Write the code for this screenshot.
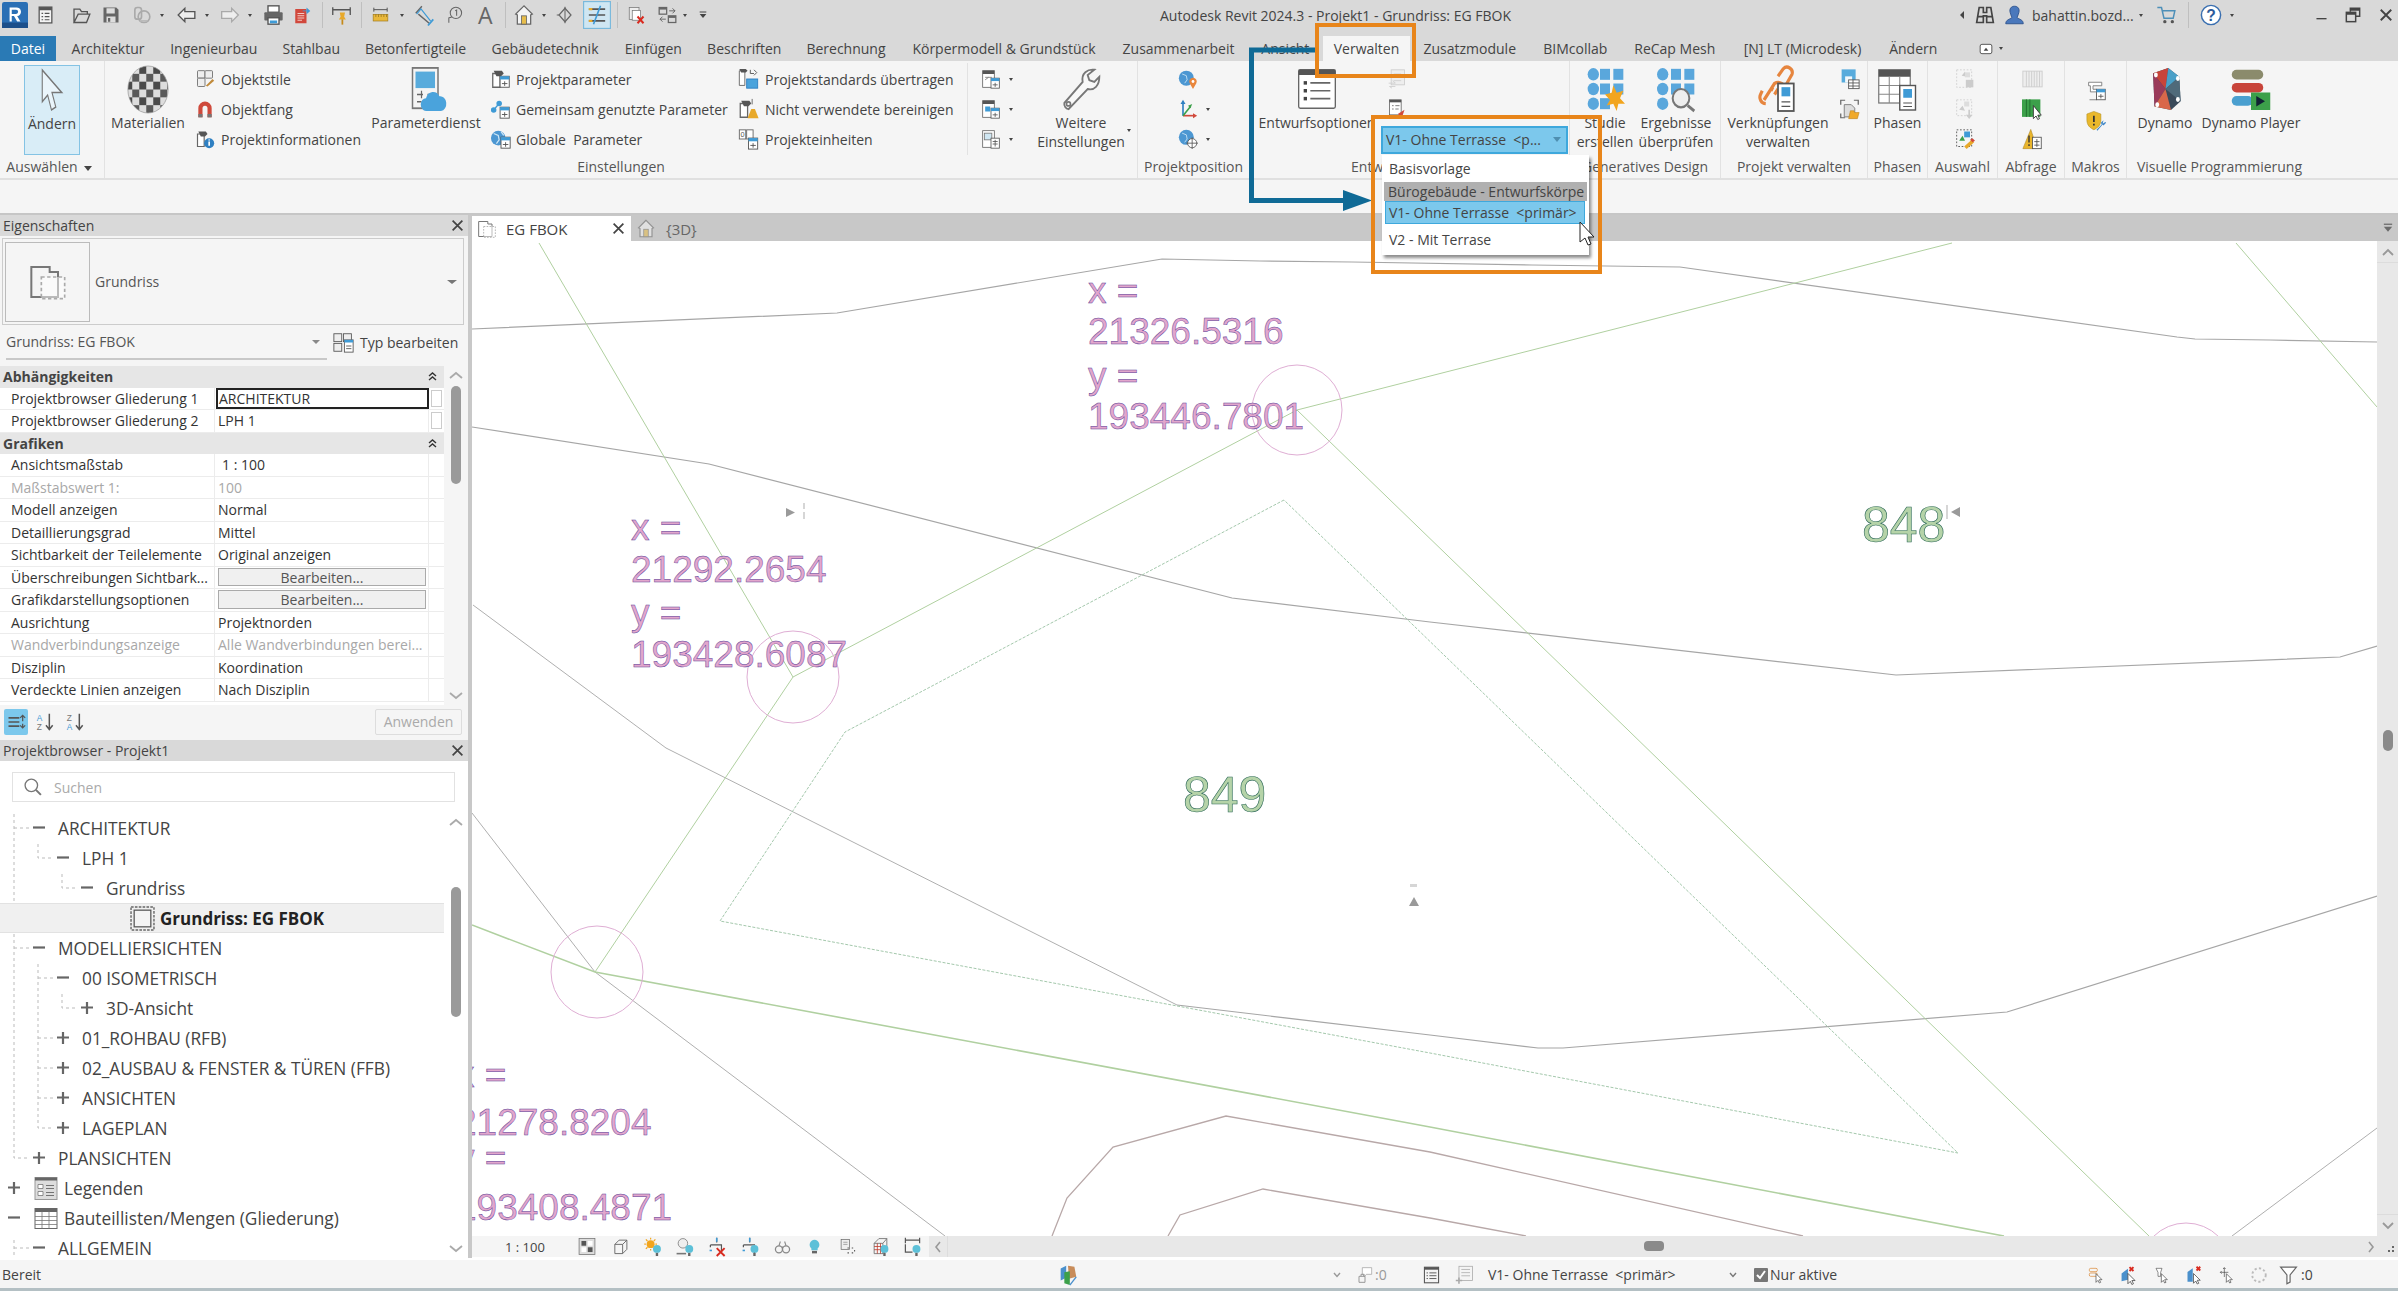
<!DOCTYPE html>
<html lang="de">
<head>
<meta charset="utf-8">
<title>Autodesk Revit 2024.3 - Projekt1 - Grundriss: EG FBOK</title>
<style>
  html, body { margin: 0; height: 100%; overflow: hidden; background: #fff; }
  body { font: 14px "Open Sans", "Noto Sans", sans-serif; color: #333; }
</style>
</head>
<body>
<rvt-app>
  <rvt-titlebar slot="top">
    <rvt-icon name="logo" w="26" h="26" style="margin-left:2px"></rvt-icon>
    <rvt-icon name="doclist" w="19" h="20" style="margin-left:8px"></rvt-icon>
    <rvt-icon name="open" w="21" h="20" style="margin-left:16px"></rvt-icon>
    <rvt-icon name="save" w="18" h="20" style="margin-left:10px"></rvt-icon>
    <rvt-icon name="sync" w="23" h="20" style="margin-left:10px"></rvt-icon>
    <rvt-caret style="margin-left:7px"></rvt-caret>
    <rvt-icon name="undo" w="23" h="20" style="margin-left:11px"></rvt-icon>
    <rvt-caret style="margin-left:7px"></rvt-caret>
    <rvt-icon name="redo" w="20" h="20" style="margin-left:11px"></rvt-icon>
    <rvt-caret style="margin-left:8px"></rvt-caret>
    <rvt-icon name="print" w="23" h="22" style="margin-left:10px"></rvt-icon>
    <rvt-icon name="reddoc" w="18" h="20" style="margin-left:8px"></rvt-icon>
    <rvt-sep style="margin-left:11px"></rvt-sep>
    <rvt-icon name="dimpin" w="21" h="22" style="margin-left:8px"></rvt-icon>
    <rvt-sep style="margin-left:9px"></rvt-sep>
    <rvt-icon name="ruler" w="19" h="16" style="margin-left:9px"></rvt-icon>
    <rvt-caret style="margin-left:10px"></rvt-caret>
    <rvt-icon name="aligned" w="21" h="22" style="margin-left:10px"></rvt-icon>
    <rvt-icon name="tagone" w="17" h="20" style="margin-left:11px"></rvt-icon>
    <span class="bigA" style="margin-left:15px;width:15px;font-size:23px;color:#666;line-height:26px">A</span>
    <rvt-sep style="margin-left:12px"></rvt-sep>
    <rvt-icon name="home" w="20" h="22" style="margin-left:8px"></rvt-icon>
    <rvt-caret style="margin-left:8px"></rvt-caret>
    <rvt-icon name="target" w="18" h="22" style="margin-left:10px"></rvt-icon>
    <rvt-icon name="thin" w="30" h="28" style="margin-left:8px"></rvt-icon>
    <rvt-sep style="margin-left:5px"></rvt-sep>
    <rvt-icon name="closeviews" w="18" h="22" style="margin-left:9px"></rvt-icon>
    <rvt-icon name="switchw" w="23" h="20" style="margin-left:11px"></rvt-icon>
    <rvt-caret style="margin-left:4px"></rvt-caret>
    <rvt-icon name="custom" w="8" h="10" style="margin-left:12px"></rvt-icon>
    <span slot="title">Autodesk Revit 2024.3 - Projekt1 - Grundriss: EG FBOK</span>
    <rvt-caret slot="right" dir="left"></rvt-caret>
    <rvt-icon slot="right" name="binoc" w="20" h="20" style="margin-left:11px"></rvt-icon>
    <rvt-icon slot="right" name="user" w="21" h="22" style="margin-left:9px"></rvt-icon>
    <span slot="right" style="margin-left:7px;width:102px;white-space:nowrap">bahattin.bozd...</span>
    <rvt-caret slot="right" style="margin-left:5px"></rvt-caret>
    <rvt-icon slot="right" name="cart" w="21" h="20" style="margin-left:13px"></rvt-icon>
    <rvt-sep slot="right" style="margin-left:11px"></rvt-sep>
    <rvt-icon slot="right" name="help" w="22" h="22" style="margin-left:11px"></rvt-icon>
    <rvt-caret slot="right" style="margin-left:8px"></rvt-caret>
    <rvt-icon slot="right" name="min" w="11" h="20" style="margin-left:82px"></rvt-icon>
    <rvt-icon slot="right" name="restore" w="16" h="16" style="margin-left:18px"></rvt-icon>
    <rvt-icon slot="right" name="close" w="14" h="14" style="margin-left:18px;margin-right:5px"></rvt-icon>
  </rvt-titlebar>

  <rvt-tabs slot="top">
    <rvt-tab kind="file" style="width:56px;margin-right:2.5px">Datei</rvt-tab>
    <rvt-tab style="width:99px">Architektur</rvt-tab>
    <rvt-tab style="width:112.5px">Ingenieurbau</rvt-tab>
    <rvt-tab style="width:82.5px">Stahlbau</rvt-tab>
    <rvt-tab style="width:126px">Betonfertigteile</rvt-tab>
    <rvt-tab style="width:133px">Gebäudetechnik</rvt-tab>
    <rvt-tab style="width:83.5px">Einfügen</rvt-tab>
    <rvt-tab style="width:98.5px">Beschriften</rvt-tab>
    <rvt-tab style="width:105px">Berechnung</rvt-tab>
    <rvt-tab style="width:211px">Körpermodell &amp; Grundstück</rvt-tab>
    <rvt-tab style="width:138px">Zusammenarbeit</rvt-tab>
    <rvt-tab style="width:75.5px">Ansicht</rvt-tab>
    <rvt-tab kind="active" style="width:87px">Verwalten</rvt-tab>
    <rvt-tab style="width:119.5px">Zusatzmodule</rvt-tab>
    <rvt-tab style="width:91.5px">BIMcollab</rvt-tab>
    <rvt-tab style="width:107.5px">ReCap Mesh</rvt-tab>
    <rvt-tab style="width:148px">[N] LT (Microdesk)</rvt-tab>
    <rvt-tab style="width:73.5px">Ändern</rvt-tab>
    <rvt-icon name="minribbon" w="18" h="14" style="margin-left:27px"></rvt-icon>
    <rvt-caret style="margin-left:4px"></rvt-caret>
  </rvt-tabs>

  <rvt-ribbon slot="top">
    <rvt-panel label="Auswählen" caret style="width:105px">
      <rvt-big icon="cursor" iw="26" ih="40" pressed style="width:56px;margin-left:24px">Ändern</rvt-big>
    </rvt-panel>

    <rvt-panel label="Einstellungen" style="width:1033px">
      <rvt-big icon="sphere" iw="42" ih="47" style="width:80px;margin-left:3px">Materialien</rvt-big>
      <rvt-col style="width:167px;margin-left:7px">
        <rvt-small icon="objstyle" gap="6">Objektstile</rvt-small>
        <rvt-small icon="magnet" gap="6">Objektfang</rvt-small>
        <rvt-small icon="projinfo" gap="6">Projektinformationen</rvt-small>
      </rvt-col>
      <rvt-big icon="paramsvc" iw="36" ih="44" style="width:110px;margin-left:9px">Parameterdienst</rvt-big>
      <rvt-col style="width:237px;margin-left:9px">
        <rvt-small icon="projparam" gap="4" iw="22">Projektparameter</rvt-small>
        <rvt-small icon="sharedparam" gap="4" iw="22">Gemeinsam genutzte Parameter</rvt-small>
        <rvt-small icon="globalparam" gap="4" iw="22">Globale  Parameter</rvt-small>
      </rvt-col>
      <rvt-col style="width:218px;margin-left:10px">
        <rvt-small icon="transfer" gap="5" iw="23">Projektstandards übertragen</rvt-small>
        <rvt-small icon="purge" gap="5" iw="23">Nicht verwendete bereinigen</rvt-small>
        <rvt-small icon="units" gap="5" iw="23">Projekteinheiten</rvt-small>
      </rvt-col>
      <rvt-sep tall style="margin-left:12px"></rvt-sep>
      <rvt-col style="width:40px;margin-left:13px">
        <rvt-small icon="seta" iw="20" caret></rvt-small>
        <rvt-small icon="setb" iw="20" caret></rvt-small>
        <rvt-small icon="setc" iw="20" caret></rvt-small>
      </rvt-col>
      <rvt-big icon="wrench" iw="40" ih="42" style="width:90px;margin-left:15px">Weitere<br>Einstellungen</rvt-big>
      <rvt-caret style="margin:68px 0 0 1px;align-self:flex-start"></rvt-caret>
    </rvt-panel>

    <rvt-panel label="Projektposition" style="width:112px">
      <rvt-col style="width:44px;margin-left:40px">
        <rvt-small icon="globepin" iw="20"></rvt-small>
        <rvt-small icon="axes" iw="20" caret></rvt-small>
        <rvt-small icon="globecross" iw="20" caret></rvt-small>
      </rvt-col>
    </rvt-panel>

    <rvt-panel label="Entwurfsoptionen" style="width:320px">
      <rvt-big icon="options" iw="40" ih="42" style="width:116px;margin-left:9px">Entwurfsoptionen</rvt-big>
      <rvt-col style="width:30px;margin-left:12px">
        <rvt-small icon="optfaded" iw="20"></rvt-small>
        <rvt-small icon="optred" iw="20"></rvt-small>
      </rvt-col>
    </rvt-panel>

    <rvt-panel label="Generatives Design" style="width:151px">
      <rvt-big icon="study" iw="40" ih="44" style="width:62px;margin-left:4px">Studie<br>erstellen</rvt-big>
      <rvt-big icon="results" iw="40" ih="44" style="width:76px;margin-left:2px">Ergebnisse<br>überprüfen</rvt-big>
    </rvt-panel>

    <rvt-panel label="Projekt verwalten" style="width:147px">
      <rvt-big icon="links" iw="42" ih="44" style="width:106px;margin-left:4px">Verknüpfungen<br>verwalten</rvt-big>
      <rvt-col style="width:24px;margin-left:8px">
        <rvt-small icon="decal" iw="21"></rvt-small>
        <rvt-small icon="startview" iw="21"></rvt-small>
      </rvt-col>
    </rvt-panel>

    <rvt-panel label="Phasen" style="width:60px">
      <rvt-big icon="phases" iw="42" ih="42" style="width:59px">Phasen</rvt-big>
    </rvt-panel>

    <rvt-panel label="Auswahl" style="width:70px">
      <rvt-col style="width:24px;margin-left:27px">
        <rvt-small icon="selsave" iw="20"></rvt-small>
        <rvt-small icon="selload" iw="20"></rvt-small>
        <rvt-small icon="seledit" iw="20"></rvt-small>
      </rvt-col>
    </rvt-panel>

    <rvt-panel label="Abfrage" style="width:67px">
      <rvt-col style="width:24px;margin-left:24px">
        <rvt-small icon="idgrey" iw="21"></rvt-small>
        <rvt-small icon="idgreen" iw="21"></rvt-small>
        <rvt-small icon="warn" iw="21"></rvt-small>
      </rvt-col>
    </rvt-panel>

    <rvt-panel label="Makros" style="width:62px">
      <rvt-col style="width:24px;margin-left:21px;padding-top:15px">
        <rvt-small icon="macro" iw="21"></rvt-small>
        <rvt-small icon="shield" iw="21"></rvt-small>
      </rvt-col>
    </rvt-panel>

    <rvt-panel label="Visuelle Programmierung" style="width:185px;border-right:0">
      <rvt-big icon="dynamo" iw="33" ih="42" style="width:64px;margin-left:6px">Dynamo</rvt-big>
      <rvt-big icon="player" iw="42" ih="42" style="width:100px;margin-left:4px">Dynamo Player</rvt-big>
    </rvt-panel>
  </rvt-ribbon>

  <rvt-properties slot="left">
    <rvt-prop-head>Abhängigkeiten</rvt-prop-head>
    <rvt-prop-row label="Projektbrowser Gliederung 1" kind="input" box>ARCHITEKTUR</rvt-prop-row>
    <rvt-prop-row label="Projektbrowser Gliederung 2" box>LPH 1</rvt-prop-row>
    <rvt-prop-head>Grafiken</rvt-prop-head>
    <rvt-prop-row label="Ansichtsmaßstab"><span style="padding-left:4px">1 : 100</span></rvt-prop-row>
    <rvt-prop-row label="Maßstabswert 1:" kind="off">100</rvt-prop-row>
    <rvt-prop-row label="Modell anzeigen">Normal</rvt-prop-row>
    <rvt-prop-row label="Detaillierungsgrad">Mittel</rvt-prop-row>
    <rvt-prop-row label="Sichtbarkeit der Teilelemente">Original anzeigen</rvt-prop-row>
    <rvt-prop-row label="Überschreibungen Sichtbark..." kind="button">Bearbeiten...</rvt-prop-row>
    <rvt-prop-row label="Grafikdarstellungsoptionen" kind="button">Bearbeiten...</rvt-prop-row>
    <rvt-prop-row label="Ausrichtung">Projektnorden</rvt-prop-row>
    <rvt-prop-row label="Wandverbindungsanzeige" kind="off">Alle Wandverbindungen berei...</rvt-prop-row>
    <rvt-prop-row label="Disziplin">Koordination</rvt-prop-row>
    <rvt-prop-row label="Verdeckte Linien anzeigen">Nach Disziplin</rvt-prop-row>
  </rvt-properties>

  <rvt-browser slot="left">
    <rvt-tree-row level="1" exp="-">ARCHITEKTUR</rvt-tree-row>
    <rvt-tree-row level="2" exp="-">LPH 1</rvt-tree-row>
    <rvt-tree-row level="3" exp="-">Grundriss</rvt-tree-row>
    <rvt-tree-row level="4" selected>Grundriss: EG FBOK</rvt-tree-row>
    <rvt-tree-row level="1" exp="-">MODELLIERSICHTEN</rvt-tree-row>
    <rvt-tree-row level="2" exp="-">00 ISOMETRISCH</rvt-tree-row>
    <rvt-tree-row level="3" exp="+">3D-Ansicht</rvt-tree-row>
    <rvt-tree-row level="2" exp="+">01_ROHBAU (RFB)</rvt-tree-row>
    <rvt-tree-row level="2" exp="+">02_AUSBAU &amp; FENSTER &amp; TÜREN (FFB)</rvt-tree-row>
    <rvt-tree-row level="2" exp="+">ANSICHTEN</rvt-tree-row>
    <rvt-tree-row level="2" exp="+">LAGEPLAN</rvt-tree-row>
    <rvt-tree-row level="1" exp="+">PLANSICHTEN</rvt-tree-row>
    <rvt-tree-row level="0" exp="+" icon="legend">Legenden</rvt-tree-row>
    <rvt-tree-row level="0" exp="-" icon="schedule">Bauteillisten/Mengen (Gliederung)</rvt-tree-row>
    <rvt-tree-row level="1" exp="-">ALLGEMEIN</rvt-tree-row>
  </rvt-browser>

  <rvt-viewtabs slot="right"></rvt-viewtabs>
  <rvt-canvas slot="right"></rvt-canvas>
  <rvt-viewbar slot="right"></rvt-viewbar>

  <rvt-statusbar slot="bottom"></rvt-statusbar>

  <rvt-callouts slot="over">
    <rvt-option>Basisvorlage</rvt-option>
    <rvt-option kind="current">Bürogebäude - Entwurfskörpe</rvt-option>
    <rvt-option kind="hover">V1- Ohne Terrasse&nbsp; &lt;primär&gt;</rvt-option>
    <rvt-option>V2 - Mit Terrase</rvt-option>
  </rvt-callouts>
</rvt-app>

<script>
// small table with plus, sits in the corner of most of the parameter icons
const tbl = (x, y) => `<rect x="${x}" y="${y}" width="10" height="12" fill="#fff" stroke="#555"/><rect x="${x}" y="${y}" width="10" height="3.5" fill="#3f9bd6"/><path d="M${x+2} ${y+8}h6M${x+5} ${y+5.5}v5" stroke="#555"/>`;
const phone = `<path d="M3 6h8v15H3z" fill="#fff" stroke="#666" stroke-width="1.4"/><path d="M4 3h9l2 3-3 3H7z" fill="#555"/>`;

const ICONS = {
  logo: `<rect x="0" y="0" width="24" height="24" rx="2" fill="#2a6fb5"/><rect x="0" y="19" width="24" height="5" fill="#1c4f8a"/><path d="M7 5h6a4 4 0 0 1 1 8l3 5h-3l-3-5h-2v5H7zM9 7.2v3.8h4a1.9 1.9 0 0 0 0-3.8z" fill="#fff"/>`,
  doclist: `<rect x="4" y="2" width="16" height="20" fill="#f4f4f4" stroke="#555" stroke-width="1.6"/><rect x="4" y="2" width="16" height="4" fill="#555"/><path d="M7 10h2M11 10h6M7 14h2M11 14h6M7 18h2M11 18h6" stroke="#555" stroke-width="1.4"/>`,
  open: `<path d="M3 21V5h7l2 3h7v3M3 21l5-10h14l-4 10z" fill="none" stroke="#555" stroke-width="1.6"/>`,
  save: `<path d="M2 2h17l3 3v17H2z" fill="#666"/><rect x="6" y="3" width="11" height="7" fill="#ddd"/><rect x="6" y="14" width="12" height="8" fill="#ddd"/><rect x="8" y="16" width="3" height="5" fill="#666"/>`,
  sync: `<circle cx="15" cy="14" r="7" fill="none" stroke="#aaa" stroke-width="2"/><rect x="4" y="3" width="8" height="14" rx="3" fill="none" stroke="#aaa" stroke-width="2"/><path d="M10 19h9" stroke="#bbb" stroke-width="2"/>`,
  undo: `<path d="M2 12l8-8v4h12v8H10v4z" fill="#eee" stroke="#555" stroke-width="1.6"/>`,
  redo: `<path d="M22 12l-8-8v4H2v8h12v4z" fill="#eee" stroke="#aaa" stroke-width="1.6"/>`,
  print: `<rect x="6" y="2" width="12" height="7" fill="#fff" stroke="#555" stroke-width="1.5"/><rect x="2" y="9" width="20" height="9" rx="1" fill="#666"/><rect x="6" y="15" width="12" height="7" fill="#fff" stroke="#555" stroke-width="1.5"/><rect x="8" y="18" width="8" height="3" fill="#3f9bd6"/>`,
  reddoc: `<rect x="3" y="4" width="15" height="19" fill="#d1483c"/><path d="M6 10h9M6 13h9M6 16h9M6 19h6" stroke="#f4c8c2" stroke-width="1.4"/><path d="M13 6h5V2l5 4.5-5 4.5V7h-5z" fill="#3f9bd6"/>`,
  dimpin: `<path d="M2 3v9M22 3v9M2 6h20" stroke="#555" stroke-width="1.5" fill="none"/><path d="M10 9h6l-1 5 2 3H9l2-3z" fill="#e8a92a"/><path d="M13 17v6" stroke="#c58a1a" stroke-width="2"/>`,
  ruler: `<path d="M2 1v6M22 1v6M2 4h20" stroke="#555" stroke-width="1.5" fill="none"/><rect x="1" y="11" width="22" height="10" fill="#e9b83c" stroke="#a07a1a"/><path d="M5 11v4M9 11v4M13 11v4M17 11v4M21 11v4" stroke="#8a6a1a"/>`,
  aligned: `<path d="M2 10L9 2M5 11l13 11" stroke="#666" stroke-width="1.6" fill="none"/><path d="M16 24l6-7" stroke="#3f9bd6" stroke-width="2"/><path d="M3 11l5-6 11 14" stroke="#3f9bd6" stroke-width="1.4" fill="none"/>`,
  tagone: `<circle cx="14" cy="9" r="8" fill="none" stroke="#666" stroke-width="1.5"/><path d="M13 6l2-1v8" stroke="#666" stroke-width="1.5" fill="none"/><path d="M8 15l-4 1v7" stroke="#666" stroke-width="1.5" fill="none"/>`,
  home: `<path d="M12 1L2 11l2 1v11h16V12l2-1z" fill="#f4f4f4" stroke="#666" stroke-width="1.5"/><rect x="9" y="13" width="6" height="10" fill="#e7bd4a" stroke="#666"/>`,
  target: `<path d="M12 1v22M1 12h3" stroke="#666" stroke-width="1.4"/><path d="M12 3l8 9-8 9-8-9z" fill="none" stroke="#666" stroke-width="1.6"/>`,
  thin: `<rect x="0.5" y="0.5" width="23" height="23" fill="#cfe6f2" stroke="#7ab9dc"/><path d="M5 7h14M5 12h14M5 17h14" stroke="#555" stroke-width="1.4"/><path d="M9 20L15 4" stroke="#3f9bd6" stroke-width="1.4"/><path d="M5 7h3M5 17h3" stroke="#e8a92a" stroke-width="2"/>`,
  closeviews: `<rect x="3" y="2" width="13" height="16" fill="#eee" stroke="#777"/><rect x="7" y="6" width="11" height="13" fill="#fff" stroke="#777"/><path d="M14 14l8 9M22 14l-8 9" stroke="#d92b20" stroke-width="2.6"/>`,
  switchw: `<rect x="2" y="3" width="9" height="8" fill="none" stroke="#666" stroke-width="1.5"/><rect x="13" y="13" width="9" height="8" fill="none" stroke="#666" stroke-width="1.5"/><rect x="2" y="3" width="9" height="2.5" fill="#666"/><rect x="13" y="13" width="9" height="2.5" fill="#666"/><path d="M14 7h7M18 4l3 3-3 3M10 17H3M6 14l-3 3 3 3" stroke="#555" fill="none"/>`,
  custom: `<path d="M2 3h20" stroke="#444" stroke-width="3"/><path d="M2 9h20l-10 12z" fill="#444"/>`,
  binoc: `<path d="M5 3h5v6h4V3h5l3 18h-8v-8h-4v8H2z" fill="none" stroke="#444" stroke-width="2"/><path d="M3 14h7M14 14h7" stroke="#444" stroke-width="2"/>`,
  user: `<path d="M12 2c4 0 6 3 5 7-1 4-2 5-2 6 2 2 7 2 7 7H2c0-5 5-5 7-7 0-1-1-2-2-6-1-4 1-7 5-7z" fill="#4a78bc" stroke="#2a4f8a"/>`,
  cart: `<path d="M1 3h5l3 13h11l2-9H7" fill="none" stroke="#4d8fb8" stroke-width="1.8"/><circle cx="10" cy="20" r="2" fill="#555"/><circle cx="19" cy="20" r="2" fill="#555"/>`,
  help: `<circle cx="12" cy="12" r="10.5" fill="#fff" stroke="#3a6fb0" stroke-width="1.6"/><text x="12" y="18" font-size="17" font-weight="700" text-anchor="middle" fill="#2c5c9c" font-family="Liberation Sans, sans-serif">?</text>`,
  min: `<path d="M1 20h22" stroke="#444" stroke-width="3"/>`,
  restore: `<path d="M8 7V2h14v12h-6" fill="none" stroke="#444" stroke-width="2.2"/><rect x="2" y="8" width="14" height="14" fill="none" stroke="#444" stroke-width="2.2"/><path d="M2 10h14M8 4h14" stroke="#444" stroke-width="3"/>`,
  close: `<path d="M3 3l18 18M21 3L3 21" stroke="#444" stroke-width="3.2"/>`,
  minribbon: `<rect x="2" y="4" width="20" height="16" rx="3" fill="#fff" stroke="#444" stroke-width="1.5"/><path d="M8 15l4-5 4 5z" fill="#444"/>`,

  cursor: `<path d="M3 0v19l5-4 3.5 9 4-1.8L12 13.5h9z" fill="#eaf5fb" stroke="#777" stroke-width="1"/>`,
  sphere: `<defs><pattern id="chk" width="8" height="8" patternUnits="userSpaceOnUse" x="-1" y="0"><rect width="8" height="8" fill="#ddd"/><rect width="4" height="4" fill="#4a4a4a"/><rect x="4" y="4" width="4" height="4" fill="#5a5a5a"/></pattern></defs><ellipse cx="12" cy="12" rx="11.5" ry="12" fill="url(#chk)" stroke="#999" stroke-width=".4"/>`,
  objstyle: `<rect x="3" y="2" width="9" height="9" rx="1" fill="#eee" stroke="#666"/><rect x="12" y="2" width="9" height="9" rx="1" fill="#eee" stroke="#666"/><rect x="3" y="11" width="9" height="10" rx="1" fill="#eee" stroke="#666"/><path d="M13 20l8-8 2 2-8 7z" fill="#c08a3a"/>`,
  magnet: `<path d="M4 22V11a8 8 0 0 1 16 0v11h-5V11a3 3 0 0 0-6 0v11z" fill="#cf4a3c"/><rect x="4" y="18" width="5" height="4" fill="#777"/><rect x="15" y="18" width="5" height="4" fill="#777"/>`,
  projinfo: phone + `<circle cx="17" cy="17" r="6" fill="#2f80c2"/><path d="M17 15v5M17 12.5v1.2" stroke="#fff" stroke-width="2"/>`,
  paramsvc: `<rect x="3" y="0.5" width="17" height="22" fill="#f4f4f4" stroke="#777"/><rect x="5" y="2.5" width="13" height="9" fill="#58abdc"/><path d="M6 15h4M13 15h4M6 19h3M12 19h5M9 13v4M14 17v4" stroke="#666" stroke-width=".8"/><path d="M12 24a3.5 3.5 0 0 1 0-7 5 5 0 0 1 9-1 4 4 0 0 1 1 8z" fill="#4aa3dc"/>`,
  projparam: phone + tbl(11, 9),
  sharedparam: `<circle cx="4" cy="13" r="3" fill="#3f9bd6"/><circle cx="10" cy="6" r="3" fill="#3f9bd6"/><path d="M4 13l6-7" stroke="#3f9bd6" stroke-width="1.5"/>` + tbl(11, 10),
  globalparam: `<circle cx="9" cy="11" r="8" fill="#4c97d2"/><path d="M4 6l5 2 1 5-3 4M12 4l3 4" stroke="#cfe7f6" fill="none" stroke-width="1.3"/>` + tbl(12, 10),
  transfer: `<path d="M2 3h6v16H2z" fill="#fff" stroke="#666"/><path d="M2 1h7l2 2-2 2H4z" fill="#555"/><path d="M14 2v4h4M18 2l3 3-3 3" stroke="#555" fill="none"/><rect x="10" y="12" width="12" height="10" fill="#4aa3dc" stroke="#2f80c2"/>`,
  purge: phone + `<path d="M16 1v6" stroke="#666"/><path d="M15 12h4l4 10H11z" fill="#e8a92a"/>`,
  units: `<rect x="2" y="2" width="7" height="10" fill="#fff" stroke="#666"/><rect x="10" y="2" width="7" height="10" fill="#fff" stroke="#666"/><text x="5.5" y="10" font-size="8" text-anchor="middle" font-family="Liberation Sans" fill="#555">0</text>` + tbl(12, 11),
  seta: `<rect x="2" y="2" width="14" height="20" fill="#fff" stroke="#666"/><rect x="2" y="2" width="14" height="4" fill="#555"/><path d="M5 10h8M5 13l4-3" stroke="#777"/>` + tbl(12, 11),
  setb: `<rect x="2" y="2" width="14" height="20" fill="#fff" stroke="#666"/><rect x="2" y="2" width="14" height="4" fill="#555"/><rect x="5" y="9" width="6" height="6" fill="#3f9bd6"/>` + tbl(12, 11),
  setc: `<rect x="2" y="2" width="14" height="20" fill="#fff" stroke="#666"/><rect x="4" y="5" width="9" height="8" fill="#cfe6f2" stroke="#777"/><rect x="12" y="11" width="10" height="12" fill="#fff" stroke="#555"/><path d="M14 15h6M14 18h6M17 13v8" stroke="#555"/>`,
  wrench: `<path d="M20 1c-4-.5-8 2-7 7L2 20a3 3 0 0 0 2.5 3.5L16 12c4 1 7-2 7-7l-3 3-3-1-1-3z" fill="#f8f8f8" stroke="#777" stroke-width="1.1"/><circle cx="4.5" cy="20.5" r="1.2" fill="none" stroke="#777"/>`,
  globepin: `<circle cx="10" cy="11" r="9" fill="#4c97d2"/><path d="M5 6l5 2 1 5-3 4" stroke="#cfe7f6" fill="none"/><path d="M18 24l-4-7a4.5 4.5 0 1 1 8 0z" fill="#e9863c"/><circle cx="18" cy="15" r="1.7" fill="#fff"/>`,
  axes: `<path d="M6 20V3" stroke="#2f80c2" stroke-width="2"/><path d="M6 1l-3 5h6z" fill="#2f80c2"/><path d="M6 20h14" stroke="#d14a3c" stroke-width="2"/><path d="M23 20l-5-3v6z" fill="#d14a3c"/><path d="M6 20l9-11" stroke="#3ca04a" stroke-width="2"/><path d="M17 6l-5 2 3 3z" fill="#3ca04a"/>`,
  globecross: `<circle cx="10" cy="10" r="9" fill="#4c97d2"/><path d="M5 5l5 2 1 5-3 4" stroke="#cfe7f6" fill="none"/><circle cx="17" cy="17" r="5.5" fill="#fff" stroke="#555"/><path d="M17 10v14M10 17h14" stroke="#555"/>`,
  options: `<rect x="1" y="1" width="22" height="22" rx="1" fill="#fff" stroke="#666" stroke-width=".8"/><rect x="1" y="1" width="22" height="3" fill="#555"/><rect x="4" y="7.5" width="2" height="2" fill="#444"/><rect x="4" y="12" width="2" height="2" fill="#444"/><rect x="4" y="16.5" width="2" height="2" fill="#444"/><path d="M8 8.5h12M8 13h12M8 17.5h12" stroke="#666" stroke-width=".9"/>`,
  optfaded: `<rect x="5" y="1" width="16" height="18" fill="#eee" stroke="#ccc"/><path d="M8 6h9M8 10h9M8 14h9" stroke="#ccc"/><path d="M2 17h8l-3-3M10 21H3l3 2" stroke="#ccc" fill="none"/>`,
  optred: `<rect x="3" y="1" width="14" height="18" fill="#fff" stroke="#666"/><rect x="3" y="1" width="14" height="3" fill="#555"/><path d="M6 8h2M10 8h5M6 12h2M10 12h4" stroke="#666"/><path d="M13 18l8-5-3 9z" fill="#d14a3c"/>`,
  study: `<g fill="#5aa7dc"><circle cx="5" cy="4" r="3.4"/><rect x="9" y="1" width="6" height="6"/><rect x="17" y="1" width="6" height="6"/><circle cx="5" cy="12" r="3.4"/><rect x="9" y="9" width="6" height="6"/><rect x="17" y="9" width="6" height="6"/><circle cx="5" cy="20" r="3.4"/><rect x="9" y="17" width="6" height="6"/></g><path d="M17 10l2 4 4-1-2 4 3 3-4 0-1 4-2-4-4 1 2-3-3-3 4-1z" fill="#f2a51e"/>`,
  results: `<g fill="#5aa7dc"><circle cx="4" cy="4" r="3.4"/><rect x="9" y="1" width="6" height="6"/><rect x="17" y="1" width="6" height="6"/><circle cx="4" cy="12" r="3.4"/><rect x="9" y="9" width="6" height="6"/><rect x="17" y="9" width="6" height="6"/><circle cx="4" cy="20" r="3.4"/></g><circle cx="15" cy="17" r="5" fill="#eee" stroke="#777" stroke-width="1.2"/><path d="M19 21l4 3" stroke="#777" stroke-width="1.6"/>`,
  links: `<path d="M4 18l6-9a4 4 0 0 1 6 4l-2 3M9 11l-1 2M2 15l1-2M5 20a3.5 3.5 0 0 1-3-5" fill="none" stroke="#e6853e" stroke-width="1.8"/><path d="M12 12l-2 3M17 9l3-5a3 3 0 0 0-5-3l-3 4" fill="none" stroke="#e6853e" stroke-width="1.8"/><rect x="12" y="9" width="9" height="15" fill="#fff" stroke="#555"/><rect x="14" y="11" width="5" height="5" fill="#3f9bd6"/><path d="M14 19h5M14 21.5h5" stroke="#555" stroke-width=".7"/>`,
  decal: `<rect x="3" y="1" width="16" height="15" fill="#58abdc"/><rect x="7" y="9" width="8" height="7" fill="#f2f8fc"/><rect x="11" y="13" width="12" height="10" fill="#fff" stroke="#555"/><path d="M11 16.5h12M11 20h12M16 13v10" stroke="#555"/>`,
  startview: `<path d="M2 7V2h5M22 7V2h-5M2 17v5h5" fill="none" stroke="#666" stroke-width="1.4"/><path d="M6 7h8l4 4v10H6z" fill="#ddd" stroke="#777"/><path d="M13 14h4l1 2h5l-2 7H11z" fill="#f0a92a" stroke="#b57c1a" stroke-width=".6"/>`,
  phases: `<rect x="1" y="1" width="18" height="19" fill="#fff" stroke="#777" stroke-width=".7"/><rect x="1" y="1" width="18" height="4" fill="#555"/><path d="M1 10h18M1 15h12M7 5v15M13 5v15" stroke="#888" stroke-width=".6"/><rect x="13" y="10" width="9" height="14" fill="#fff" stroke="#555" stroke-width=".8"/><rect x="15" y="12" width="5" height="5" fill="#3f9bd6"/><path d="M15 20h5M15 22h5" stroke="#555" stroke-width=".6"/>`,
  selsave: `<rect x="2" y="1" width="18" height="21" fill="none" stroke="#ccc" stroke-dasharray="2 2"/><path d="M8 8l4-5 1 6z" fill="#ccc"/><rect x="12" y="4" width="6" height="6" fill="#ddd"/><rect x="13" y="13" width="9" height="9" fill="#ccc"/>`,
  selload: `<rect x="2" y="1" width="18" height="19" fill="none" stroke="#ccc" stroke-dasharray="2 2"/><path d="M5 13l4-5 3 6z" fill="#ccc"/><rect x="11" y="3" width="6" height="6" fill="#ddd"/><path d="M18 13v6h3l-4 5-4-5h3v-6z" fill="#ccc"/>`,
  seledit: `<rect x="2" y="1" width="18" height="20" fill="none" stroke="#444" stroke-dasharray="2 2"/><path d="M5 14l4-6 3 6z" fill="#3ca04a"/><rect x="11" y="3" width="7" height="7" fill="#3f9bd6"/><path d="M11 21l9-8 3 3-9 8z" fill="#e8a92a"/><path d="M18 13l3-2 3 3-3 2z" fill="#d14a3c"/>`,
  idgrey: `<rect x="1" y="3" width="22" height="18" fill="#eee" stroke="#ccc"/><path d="M5 3v18M8 3v18M11 3v18M14 3v18M17 3v18M20 3v18" stroke="#ccc"/>`,
  idgreen: `<rect x="0" y="1" width="21" height="20" fill="#3ca04a"/><path d="M5 1v20M9 1v20" stroke="#1e6a2c"/><path d="M13 8v15l3-3 2 4 2-1-2-4 4 0z" fill="#fff" stroke="#333"/>`,
  warn: `<path d="M10 1L1 23h12V10z" fill="#e9b52c" stroke="#a8801a" stroke-width=".6"/><path d="M8 8v8M8 18v2" stroke="#333" stroke-width="1.6"/><rect x="12" y="10" width="10" height="13" fill="#fff" stroke="#555"/><path d="M14 15h6M17 12v9M14 19h6" stroke="#555"/>`,
  macro: `<path d="M3 2h15v4H8v4h4v3H5V6H3z" fill="#fff" stroke="#777"/><path d="M4 22h8v-6" fill="none" stroke="#777"/>` + tbl(12, 10),
  shield: `<path d="M9 1l8 3v7c0 6-4 9-8 11-4-2-8-5-8-11V4z" fill="#e9b82c" stroke="#b08a1a" stroke-width=".6"/><path d="M9 6v7M9 15v2" stroke="#333" stroke-width="2"/><path d="M13 23l6-7 1 1 3-3-1-1-3 2 1-4-3 3 1 2-6 6z" fill="#3f86c6"/>`,
  dynamo: `<path d="M3 3L14 0l8 5 1 14-7 5-12-2z" fill="#3a4a5a"/><path d="M3 3L14 0 12 12z" fill="#c8443a"/><path d="M14 0l8 5-10 7z" fill="#4aa0c8"/><path d="M3 3l9 9-8 10z" fill="#9a3a5a"/><path d="M4 22l8-10 4 12z" fill="#d9674a"/><path d="M22 5l1 14-11-7z" fill="#4f6a7a"/><g fill="#fff"><circle cx="5" cy="4" r="1.4"/><circle cx="21" cy="6" r="1.4"/><circle cx="21" cy="18" r="1.4"/><circle cx="6" cy="21" r="1.4"/></g>`,
  player: `<rect x="1" y="1" width="18" height="5.5" rx="2.7" fill="#8b8b6c"/><rect x="1" y="8.5" width="18" height="5.5" rx="2.7" fill="#c8443a"/><rect x="1" y="16" width="12" height="5.5" rx="2.7" fill="#4a9fcf"/><rect x="12" y="14" width="11" height="10" fill="#3ca04a"/><path d="M15 16v6l5-3z" fill="#123"/>`,
  planview: `<path d="M1 1h22v22H1z" fill="none" stroke="#888" stroke-dasharray="2.5 1.2" stroke-width="1.8"/><rect x="4" y="4" width="16" height="16" fill="#f4f4f4" stroke="#555" stroke-width="1.2"/>`,
  grundriss: `<path d="M2 3h11v3h5v15H2z" fill="none" stroke="#777" stroke-width="1.2"/><path d="M8 9h14v13H8z" fill="#fff" fill-opacity=".5" stroke="#aaa" stroke-dasharray="2 1.5"/>`,
  typedit: `<rect x="1" y="2" width="9" height="9" fill="#eee" stroke="#555"/><rect x="12" y="2" width="9" height="9" fill="#eee" stroke="#555"/><rect x="1" y="13" width="9" height="9" fill="#eee" stroke="#555"/><rect x="13" y="9" width="10" height="14" fill="#fff" stroke="#555"/><rect x="13" y="9" width="10" height="3" fill="#3f9bd6"/><path d="M15 16h6M15 19h6" stroke="#555"/>`,
  categ: `<path d="M3 7h13M3 12h13M3 17h13" stroke="#555" stroke-width="2"/><path d="M20 4v7M20 14v5M17 7l3-3 3 3M17 16l3 3 3-3" stroke="#555" stroke-width="1.5" fill="none"/>`,
  sortaz: `<text x="1" y="11" font-size="10" fill="#3f9bd6" font-family="Liberation Sans">A</text><text x="1" y="22" font-size="10" fill="#777" font-family="Liberation Sans">Z</text><path d="M16 2v18M12 16l4 5 4-5" stroke="#555" stroke-width="1.8" fill="none"/>`,
  sortza: `<text x="1" y="11" font-size="10" fill="#777" font-family="Liberation Sans">Z</text><text x="1" y="22" font-size="10" fill="#3f9bd6" font-family="Liberation Sans">A</text><path d="M16 2v18M12 16l4 5 4-5" stroke="#555" stroke-width="1.8" fill="none"/>`,
  search: `<circle cx="10" cy="10" r="7.5" fill="none" stroke="#777" stroke-width="1.6"/><path d="M15.5 15.5l6 6" stroke="#777" stroke-width="2.4"/>`,
  legend: `<rect x="1" y="1" width="22" height="22" fill="#ddd" stroke="#999"/><rect x="1" y="1" width="22" height="3" fill="#666"/><path d="M4 8h5v4H4zM4 15h5v4H4z" fill="#fff" stroke="#666" stroke-width=".7"/><path d="M12 9h8M12 12h8M12 16h8M12 19h8" stroke="#666" stroke-width=".9"/>`,
  schedule: `<rect x="1" y="2" width="22" height="20" fill="#fff" stroke="#666"/><rect x="1" y="2" width="22" height="3.5" fill="#666"/><path d="M1 10h22M1 14h22M1 18h22M8 5v17M15 5v17" stroke="#777" stroke-width=".8"/>`,

  vbscale: `<rect x="2" y="2" width="20" height="20" fill="#ddd" stroke="#777"/><rect x="5" y="5" width="6" height="6" fill="#555"/><rect x="13" y="13" width="6" height="6" fill="#555"/><rect x="13" y="5" width="6" height="6" fill="#fff"/><rect x="5" y="13" width="6" height="6" fill="#fff"/>`,
  vbcube: `<path d="M4 9l6-6h11v13l-6 6H4zM4 9h11v13M15 9l6-6" fill="none" stroke="#666" stroke-width="1.3"/>`,
  vbsun: `<circle cx="9" cy="9" r="5" fill="#f2a51e"/><path d="M9 1v2M9 15v2M1 9h2M15 9h2M3 3l2 2M13 13l2 2M15 3l-2 2M3 15l2-2" stroke="#f2a51e" stroke-width="1.5"/><circle cx="17" cy="15" r="5" fill="#5cc0d8"/><rect x="15.5" y="20" width="3" height="4" fill="#666"/>`,
  vbshadow: `<circle cx="10" cy="8" r="6" fill="#eee" stroke="#777"/><path d="M2 21h12" stroke="#777" stroke-width="2"/><circle cx="18" cy="15" r="5" fill="#5cc0d8"/><rect x="16.5" y="20" width="3" height="4" fill="#666"/>`,
  vbcropx: `<path d="M11 1v6M3 10h14v11M3 10v3" fill="none" stroke="#555" stroke-width="1.5"/><path d="M11 1v5" stroke="#3f9bd6" stroke-width="2"/><path d="M2 17h3" stroke="#3f9bd6" stroke-width="2"/><path d="M11 14l10 10M21 14L11 24" stroke="#d92b20" stroke-width="2.4"/>`,
  vbcrop: `<path d="M11 1v6M3 10h14v11M3 10v3" fill="none" stroke="#555" stroke-width="1.5"/><path d="M11 1v5" stroke="#3f9bd6" stroke-width="2"/><path d="M2 17h3" stroke="#3f9bd6" stroke-width="2"/><circle cx="17" cy="15" r="5" fill="#5cc0d8"/><rect x="15.5" y="20" width="3" height="4" fill="#666"/>`,
  vbglass: `<circle cx="7" cy="16" r="5" fill="none" stroke="#888" stroke-width="1.8"/><circle cx="17" cy="16" r="5" fill="none" stroke="#888" stroke-width="1.8"/><path d="M7 11l2-6M17 11l-2-6M12 14v-2" stroke="#888" stroke-width="1.5"/>`,
  vbbulb: `<path d="M12 1a8 8 0 0 1 5 14v3H7v-3A8 8 0 0 1 12 1z" fill="#5cc0d8"/><rect x="8" y="19" width="8" height="4" fill="#666"/>`,
  vbhide: `<rect x="3" y="2" width="12" height="14" fill="#eee" stroke="#666"/><path d="M6 6h6M6 9h6" stroke="#888"/><path d="M12 14h2M18 14h2M22 17v2M12 21h2M18 21h2" stroke="#555" stroke-width="1.5"/>`,
  vbsect: `<path d="M4 8l6-6h10v14l-5 5H4zM4 8h11v13M15 8l5-6" fill="none" stroke="#666"/><path d="M4 12h11M4 16h11M8 8v13M12 8v13" stroke="#c0392b"/><circle cx="17" cy="15" r="5" fill="#5cc0d8"/><rect x="15.5" y="20" width="3" height="4" fill="#666"/>`,
  vbtemp: `<path d="M3 1v7M21 1v7M3 4h18M3 9v10h9" fill="none" stroke="#555" stroke-width="1.5"/><circle cx="17" cy="15" r="5" fill="#5cc0d8"/><rect x="15.5" y="20" width="3" height="4" fill="#666"/>`,

  wshare: `<path d="M4 5l6-3v13l-6 3z" fill="#4a90cc"/><path d="M12 2l7 1 2 11-8 2z" fill="#c88c5a"/><path d="M8 9l6-1v15l-6-2z" fill="#3ca04a"/><path d="M14 23l7-9" stroke="#4a90cc" stroke-width="1.5"/>`,
  editreq: `<path d="M8 1h14v10h-8l-3 4v-4H8z" fill="#fff" stroke="#999"/><path d="M3 23v-9h9v9zM6 14v-3h4v3" fill="none" stroke="#999" stroke-width="1.5"/>`,
  optlist: `<rect x="2" y="1" width="20" height="22" fill="#f4f4f4" stroke="#555" stroke-width="1.5"/><rect x="2" y="1" width="20" height="3.5" fill="#555"/><path d="M5 9h2M9 9h10M5 13h2M9 13h10M5 17h2M9 17h10" stroke="#555" stroke-width="1.3"/>`,
  optadd: `<rect x="5" y="1" width="17" height="18" fill="#f4f4f4" stroke="#aaa"/><path d="M8 5h11M8 9h11M8 13h11" stroke="#aaa"/><path d="M5 15v8M1 19h8" stroke="#aaa" stroke-width="2"/>`,
  sel1: `<rect x="2" y="2" width="12" height="5" rx="2" fill="none" stroke="#d9822b"/><rect x="2" y="9" width="12" height="5" rx="2" fill="none" stroke="#d9822b"/><path d="M12 10v13l3-3 2 4 2-1-2-4h4z" fill="#fff" stroke="#444"/>`,
  sel2: `<path d="M2 10l8-6v14l-8 2z" fill="#4a90cc"/><path d="M12 2l5 5M17 2l-5 5" stroke="#d92b20" stroke-width="2.4"/><path d="M10 10v13l3-3 2 4 2-1-2-4h4z" fill="#fff" stroke="#444"/>`,
  sel3: `<path d="M3 2h9l-2 6v6H6V8z" fill="#fff" stroke="#555"/><path d="M11 10v13l3-3 2 4 2-1-2-4h4z" fill="#fff" stroke="#444"/>`,
  sel4: `<path d="M2 8l7-5v18H2z" fill="#4a90cc"/><path d="M14 1l5 5M19 1l-5 5" stroke="#d92b20" stroke-width="2.4"/><path d="M10 10v13l3-3 2 4 2-1-2-4h4z" fill="#fff" stroke="#444"/>`,
  sel5: `<path d="M8 1v14M2 8h12M8 1l-2 2M8 1l2 2M2 8l2-2M2 8l2 2" stroke="#444" fill="none"/><path d="M11 10v13l3-3 2 4 2-1-2-4h4z" fill="#fff" stroke="#444"/>`,
  sel6: `<circle cx="12" cy="12" r="9" fill="none" stroke="#bbb" stroke-width="2.5" stroke-dasharray="3 3"/>`,
  funnel: `<path d="M2 2h20l-8 10v9l-4 2V12z" fill="#fff" stroke="#666" stroke-width="1.5"/>`
};

class RvtIcon extends HTMLElement {
  constructor() {
    super();
    this.attachShadow({ mode: "open" });
  }
  connectedCallback() {
    const w = this.getAttribute("w") || 20;
    const h = this.getAttribute("h") || w;
    const par = this.hasAttribute("stretch") ? "none" : "xMidYMid meet";
    this.shadowRoot.innerHTML = `<style>:host{display:inline-flex;flex:none;width:${w}px;height:${h}px}svg{display:block;overflow:visible}</style>
      <svg width="${w}" height="${h}" viewBox="0 0 24 24" preserveAspectRatio="${par}">${ICONS[this.getAttribute("name")] || ""}</svg>`;
  }
}

class RvtCaret extends HTMLElement {
  constructor() {
    super();
    this.attachShadow({ mode: "open" });
    this.shadowRoot.innerHTML = `<style>
      :host { display: inline-block; flex: none; width: 0; height: 0; border-style: solid; border-width: 3px 2.5px 0 2.5px; border-color: #444 transparent transparent transparent; }
      :host([dir="left"]) { border-width: 4px 4px 4px 0; border-color: transparent #444 transparent transparent; }
    </style>`;
  }
}

class RvtSep extends HTMLElement {
  constructor() {
    super();
    this.attachShadow({ mode: "open" });
    this.shadowRoot.innerHTML = `<style>
      :host { display: block; flex: none; width: 1px; height: 26px; background: #bfbfbf; }
      :host([tall]) { height: 92px; background: #e2e2e2; margin-top: 2px; align-self: flex-start; }
    </style>`;
  }
}

class RvtApp extends HTMLElement {
  get template() {
    const t = document.createElement("template");
    t.innerHTML = `
    <style>
      :host { display: flex; flex-direction: column; width: 2398px; height: 1291px; position: relative; overflow: hidden; }
      .gap { height: 35px; flex: none; background: #f5f5f5; border-bottom: 2px solid #c6c6c6; box-sizing: border-box; }
      .main { flex: 1; min-height: 0; display: grid; grid-template-columns: 468px 4px 1fr; }
      .left { display: flex; flex-direction: column; min-height: 0; }
      .split { background: #c8c8c8; }
      .right { display: flex; flex-direction: column; min-height: 0; min-width: 0; background: #fff; }
    </style>
    <slot name="top"></slot>
    <div class="gap"></div>
    <div class="main">
      <div class="left"><slot name="left"></slot></div>
      <div class="split"></div>
      <div class="right"><slot name="right"></slot></div>
    </div>
    <slot name="bottom"></slot>
    <slot name="over"></slot>
    `;
    return t;
  }
  constructor() {
    super();
    this.attachShadow({ mode: "open" });
    this.shadowRoot.appendChild(this.template.content.cloneNode(true));
  }
}

class RvtTitlebar extends HTMLElement {
  constructor() {
    super();
    this.attachShadow({ mode: "open" });
    this.shadowRoot.innerHTML = `
    <style>
      :host { display: flex; align-items: center; height: 36px; flex: none; background: #d9d9d9; color: #444; font-size: 14px; padding-bottom: 6px; box-sizing: border-box; white-space: nowrap; }
      .qat { display: flex; align-items: center; width: 713px; flex: none; }
      .title { margin-left: 444px; width: 357px; flex: none; font-size: 14px; text-align: center; }
      .right { margin-left: auto; display: flex; align-items: center; }
    </style>
    <div class="qat"><slot></slot></div>
    <div class="title"><slot name="title"></slot></div>
    <div class="right"><slot name="right"></slot></div>`;
  }
}

class RvtTabs extends HTMLElement {
  constructor() {
    super();
    this.attachShadow({ mode: "open" });
    this.shadowRoot.innerHTML = `<style>
      :host { display: flex; align-items: center; height: 25px; flex: none; background: #d9d9d9; }
    </style><slot></slot>`;
  }
}

class RvtTab extends HTMLElement {
  constructor() {
    super();
    this.attachShadow({ mode: "open" });
    this.shadowRoot.innerHTML = `<style>
      :host { display: block; flex: none; height: 25px; line-height: 25px; text-align: center; white-space: nowrap; color: #444; font-size: 14px; box-sizing: border-box; }
      :host([kind="file"]) { background: #2a7ab5; color: #fff; }
      :host([kind="active"]) { background: #f5f5f5; }
    </style><slot></slot>`;
  }
}

class RvtRibbon extends HTMLElement {
  constructor() {
    super();
    this.attachShadow({ mode: "open" });
    this.shadowRoot.innerHTML = `<style>
      :host { display: flex; height: 119px; flex: none; background: #f5f5f5; border-bottom: 2px solid #e0e0e0; box-sizing: border-box; }
    </style><slot></slot>`;
  }
}

class RvtPanel extends HTMLElement {
  constructor() {
    super();
    this.attachShadow({ mode: "open" });
    const label = this.getAttribute("label");
    const hasCaret = this.hasAttribute("caret");
    const caret = hasCaret ? `<rvt-caret style="margin-left:6px;border-width:5px 4px 0 4px;vertical-align:middle"></rvt-caret>` : "";
    this.shadowRoot.innerHTML = `
    <style>
      :host { display: flex; flex-direction: column; flex: none; box-sizing: border-box; border-right: 1px solid #e2e2e2; min-width: 0; }
      .body { display: flex; height: 94px; flex: none; white-space: nowrap; }
      .label { height: 23px; line-height: 23px; text-align: center; color: #555; font-size: 14px; white-space: nowrap; padding-right: ${hasCaret ? 6 : 0}px; }
    </style>
    <div class="body"><slot></slot></div>
    <div class="label">${label}${caret}</div>`;
  }
}

class RvtBig extends HTMLElement {
  constructor() {
    super();
    this.attachShadow({ mode: "open" });
    const icon = this.getAttribute("icon");
    this.shadowRoot.innerHTML = `
    <style>
      :host { display: flex; flex-direction: column; align-items: center; flex: none; box-sizing: border-box; padding-top: 4px; color: #444; }
      :host([pressed]) { height: 90px; margin-top: 4px; padding-top: 0; background: #d9edf7; border: 1px solid #84c3e4; }
      .ic { height: 48px; display: flex; align-items: center; justify-content: center; flex: none; }
      .tx { line-height: 19px; text-align: center; font-size: 14px; white-space: nowrap; }
    </style>
    <div class="ic"><rvt-icon name="${icon}" w="${this.getAttribute("iw")}" h="${this.getAttribute("ih")}" stretch></rvt-icon></div>
    <div class="tx"><slot></slot></div>`;
  }
}

class RvtCol extends HTMLElement {
  constructor() {
    super();
    this.attachShadow({ mode: "open" });
    this.shadowRoot.innerHTML = `<style>
      :host { display: flex; flex-direction: column; flex: none; box-sizing: content-box; padding-top: 3px; }
    </style><slot></slot>`;
  }
}

class RvtSmall extends HTMLElement {
  constructor() {
    super();
    this.attachShadow({ mode: "open" });
    const iw = this.getAttribute("iw") || 20;
    const gap = this.getAttribute("gap") || 0;
    const caret = this.hasAttribute("caret") ? `<rvt-caret style="margin-left:8px"></rvt-caret>` : "";
    this.shadowRoot.innerHTML = `
    <style>
      :host { display: flex; align-items: center; height: 30px; flex: none; color: #444; font-size: 14px; white-space: pre; }
      .tx { margin-left: ${gap}px; }
    </style>
    <rvt-icon name="${this.getAttribute("icon")}" w="${iw}" h="22"></rvt-icon>${caret}
    <span class="tx"><slot></slot></span>`;
  }
}

class RvtPaneHead extends HTMLElement {
  constructor() {
    super();
    this.attachShadow({ mode: "open" });
    this.shadowRoot.innerHTML = `
    <style>
      :host { display: flex; align-items: center; justify-content: space-between; height: 21px; flex: none; background: #d9d9d9; color: #444; padding: 0 4px 0 3px; font-size: 14px; }
    </style>
    <slot></slot><rvt-icon name="close" w="13" h="13"></rvt-icon>`;
  }
}

class RvtScrollbar extends HTMLElement {
  constructor() {
    super();
    this.attachShadow({ mode: "open" });
    const gapTop = this.getAttribute("gap") || 0;
    const len = this.getAttribute("len") || 100;
    this.shadowRoot.innerHTML = `
    <style>
      :host { display: flex; flex-direction: column; align-items: center; flex: none; width: 24px; box-sizing: border-box; height: 100%; }
      svg { flex: none; display: block; }
      .track { flex: 1; width: 100%; display: flex; justify-content: center; }
      .thumb { width: 10px; height: ${len}px; margin-top: ${gapTop}px; background: #9a9a9a; border-radius: 5px; }
    </style>
    <svg width="16" height="18" viewBox="0 0 16 18"><path d="M2 12l6-5 6 5" fill="none" stroke="#aaa" stroke-width="1.8"/></svg>
    <div class="track"><div class="thumb"></div></div>
    <svg width="16" height="18" viewBox="0 0 16 18"><path d="M2 6l6 5 6-5" fill="none" stroke="#aaa" stroke-width="1.8"/></svg>`;
  }
}

class RvtProperties extends HTMLElement {
  constructor() {
    super();
    this.attachShadow({ mode: "open" });
    this.shadowRoot.innerHTML = `
    <style>
      :host { display: flex; flex-direction: column; height: 525px; flex: none; background: #f5f5f5; color: #444; font-size: 14px; white-space: nowrap; }
      .type { height: 87px; margin: 2px 4px 0 2px; flex: none; border: 1px solid #ccc; box-sizing: border-box; display: flex; align-items: center; padding-left: 2px; color: #555; }
      .thumb { width: 85px; height: 80px; border: 1px solid #bbb; box-sizing: border-box; display: flex; align-items: center; justify-content: center; margin-right: 2px; background: #f5f5f5; }
      .type .drop { margin-left: auto; margin-right: 6px; border-width: 4px 5px 0 5px; border-top-color: #777; }
      .inst { height: 35px; flex: none; display: flex; align-items: center; padding-left: 6px; box-sizing: border-box; position: relative; margin-bottom: 6px; color: #555; }
      .inst .under { width: 321px; height: 34px; box-sizing: border-box; display: flex; align-items: center; justify-content: space-between; border-bottom: 2px solid #c8c8c8; padding-right: 7px; }
      .inst .edit { display: flex; align-items: center; gap: 6px; margin-left: 6px; color: #444; }
      .inst rvt-caret { border-width: 4px 4px 0 4px; border-top-color: #888; }
      .grid { flex: none; display: flex; height: 339px; overflow: hidden; }
      .rows { width: 444px; flex: none; background: #fff; }
      .bar { display: flex; align-items: center; height: 35px; flex: none; padding: 0 6px 2px 4px; box-sizing: border-box; }
      .tool { width: 24px; height: 26px; display: flex; align-items: center; justify-content: center; margin-right: 6px; }
      .tool.on { background: #7cc8ec; border-radius: 2px; }
      .apply { margin-left: auto; width: 87px; height: 26px; border: 1px solid #ddd; border-radius: 2px; text-align: center; line-height: 24px; box-sizing: border-box; color: #aaa; }
    </style>
    <rvt-pane-head>Eigenschaften</rvt-pane-head>
    <div class="type">
      <div class="thumb"><rvt-icon name="grundriss" w="40" h="40"></rvt-icon></div>
      <span style="margin-left:3px">Grundriss</span>
      <rvt-caret class="drop"></rvt-caret>
    </div>
    <div class="inst">
      <div class="under">Grundriss: EG FBOK <rvt-caret></rvt-caret></div>
      <div class="edit"><rvt-icon name="typedit" w="21" h="21"></rvt-icon>Typ bearbeiten</div>
    </div>
    <div class="grid">
      <div class="rows"><slot></slot></div>
      <rvt-scrollbar gap="2" len="98"></rvt-scrollbar>
    </div>
    <div class="bar">
      <div class="tool on"><rvt-icon name="categ" w="20" h="20"></rvt-icon></div>
      <div class="tool"><rvt-icon name="sortaz" w="20" h="20"></rvt-icon></div>
      <div class="tool"><rvt-icon name="sortza" w="20" h="20"></rvt-icon></div>
      <div class="apply">Anwenden</div>
    </div>`;
  }
}

class RvtPropHead extends HTMLElement {
  constructor() {
    super();
    this.attachShadow({ mode: "open" });
    this.shadowRoot.innerHTML = `
    <style>
      :host { display: flex; align-items: center; justify-content: space-between; height: 21.5px; background: #e6e6e6; color: #444; font-weight: 700; padding: 0 7px 0 3px; font-size: 14px; }
      svg { display: block; }
    </style>
    <slot></slot>
    <svg width="9" height="11" viewBox="0 0 9 11"><path d="M1 5l3.5-3L8 5M1 9l3.5-3L8 9" fill="none" stroke="#333" stroke-width="1.4"/></svg>`;
  }
}

class RvtPropRow extends HTMLElement {
  constructor() {
    super();
    this.attachShadow({ mode: "open" });
    const box = this.hasAttribute("box") ? `<span class="box"></span>` : "";
    this.shadowRoot.innerHTML = `
    <style>
      :host { display: grid; grid-template-columns: 215px 214px 15px; height: 22.5px; box-sizing: border-box; border-bottom: 1px solid #ececec; font-size: 14px; color: #333; white-space: nowrap; }
      .l { padding-left: 11px; line-height: 21px; border-right: 1px solid #ececec; overflow: hidden; }
      .v { padding-left: 3px; line-height: 21px; border-right: 1px solid #ececec; overflow: hidden; box-sizing: border-box; }
      .e { display: flex; align-items: center; justify-content: center; }
      .box { width: 11px; height: 17px; border: 1px solid #ccc; box-sizing: border-box; }
      :host([kind="off"]) { color: #a8a8a8; }
      :host([kind="input"]) .v { border: 2px solid #222; padding-left: 1px; line-height: 18px; margin-left: 1px; }
      :host([kind="button"]) .v { padding: 1px 2px 2px 3px; border-right: 1px solid #ececec; }
      .btn { display: block; height: 100%; background: #f0f0f0; border: 1px solid #aaa; box-sizing: border-box; text-align: center; line-height: 17px; color: #555; }
    </style>
    <div class="l">${this.getAttribute("label")}</div>
    <div class="v">${this.getAttribute("kind") === "button" ? `<span class="btn"><slot></slot></span>` : `<slot></slot>`}</div>
    <div class="e">${box}</div>`;
  }
}

class RvtBrowser extends HTMLElement {
  constructor() {
    super();
    this.attachShadow({ mode: "open" });
    this.shadowRoot.innerHTML = `
    <style>
      :host { display: flex; flex-direction: column; flex: 1; min-height: 0; background: #fff; color: #444; white-space: nowrap; }
      .search { height: 52px; flex: none; box-sizing: border-box; padding: 11px 13px 11px 12px; }
      .field { height: 30px; border: 1px solid #e2e2e2; box-sizing: border-box; display: flex; align-items: center; padding-left: 10px; gap: 11px; color: #aaa; font-size: 14px; }
      .wrap { flex: 1; min-height: 0; display: flex; }
      .tree { width: 444px; flex: none; position: relative; overflow: hidden; }
      .guides { position: absolute; left: 0; top: 0; }
      .rows { position: relative; }
    </style>
    <rvt-pane-head>Projektbrowser - Projekt1</rvt-pane-head>
    <div class="search"><div class="field"><rvt-icon name="search" w="20" h="20"></rvt-icon>Suchen</div></div>
    <div class="wrap">
      <div class="tree">
        <svg class="guides" width="444" height="444" viewBox="0 813 444 444"><path d="M14 814V1158H30M14 828H30M14 948H30M38 844V858H54M62 874V888H78M86 904V918H126M38 964V1128H54M38 978H54M38 1038H54M38 1068H54M38 1098H54M62 994V1008H78M14 1240V1257M14 1248H30" fill="none" stroke="#bbb" stroke-dasharray="3 3"/></svg>
        <div class="rows"><slot></slot></div>
      </div>
      <rvt-scrollbar gap="56" len="130"></rvt-scrollbar>
    </div>`;
  }
}

class RvtTreeRow extends HTMLElement {
  constructor() {
    super();
    this.attachShadow({ mode: "open" });
    const level = +this.getAttribute("level");
    const exp = this.getAttribute("exp");
    const icon = this.getAttribute("icon");
    const left = level === 0 ? 8 : 33 + (level - 1) * 24;
    const sign = exp === "+" ? `<path d="M0 5.5h12M6 0v12" stroke="#666" stroke-width="2.2"/>` : `<path d="M0 5.5h12" stroke="#666" stroke-width="2.2"/>`;
    const expander = exp ? `<svg class="x" width="12" height="12" viewBox="0 0 12 12">${sign}</svg>` : "";
    let lead = "";
    if (this.hasAttribute("selected")) lead = `<rvt-icon name="planview" w="25" h="25" style="margin-left:130px;margin-right:5px"></rvt-icon>`;
    this.shadowRoot.innerHTML = `
    <style>
      :host { display: flex; align-items: center; height: 30px; box-sizing: border-box; font-size: 17.3px; color: #444; white-space: nowrap; }
      :host([selected]) { background: #f0f0f0; border-top: 1px solid #e2e2e2; border-bottom: 1px solid #e2e2e2; font-size: 17px; font-weight: 700; color: #222; }
      .x { flex: none; margin-left: ${left}px; margin-right: 13px; }
    </style>
    ${expander}${lead}${icon ? `<rvt-icon name="${icon}" w="24" h="25" style="margin-left:1px;margin-right:6px"></rvt-icon>` : ""}<slot></slot>`;
  }
}

class RvtViewtabs extends HTMLElement {
  constructor() {
    super();
    this.attachShadow({ mode: "open" });
    this.shadowRoot.innerHTML = `
    <style>
      :host { display: flex; align-items: flex-end; height: 26px; flex: none; background: #c8c8c8; color: #444; font-size: 15px; white-space: nowrap; }
      .tab { display: flex; align-items: center; height: 25px; }
      .on { width: 159px; background: #fff; padding-left: 5px; box-sizing: border-box; }
      .t1 { margin-left: 9px; width: 106px; }
      .off { margin-left: 6px; color: #666; }
      .end { margin-left: auto; margin-right: 5px; align-self: center; }
    </style>
    <div class="tab on"><rvt-icon name="grundriss" w="20" h="20"></rvt-icon><span class="t1">EG FBOK</span><rvt-icon name="close" w="13" h="13"></rvt-icon></div>
    <div class="tab off"><rvt-icon name="home" w="18" h="19" style="opacity:.55"></rvt-icon><span style="margin-left:11px">{3D}</span></div>
    <rvt-icon class="end" name="custom" w="10" h="12" style="opacity:.7"></rvt-icon>`;
  }
}

class RvtCanvas extends HTMLElement {
  constructor() {
    super();
    this.attachShadow({ mode: "open" });
    const tag = (x, lines) => lines.map(([t, y]) => `<text x="${x}" y="${y}">${t}</text>`).join("");
    this.shadowRoot.innerHTML = `
    <style>
      :host { display: flex; flex: 1; min-height: 0; }
      svg { flex: 1; display: block; background: #fff; min-width: 0; }
      .bar { width: 21px; flex: none; background: #e8e8e8; display: flex; flex-direction: column; align-items: center; }
      .bar svg { flex: none; background: none; }
      .top { height: 21px; display: flex; align-items: center; justify-content: center; border-bottom: 1px solid #dcdcdc; width: 100%; }
      .thumb { width: 10px; height: 21px; margin-top: 467px; background: #8a8a8a; border-radius: 5px; }
      .down { margin-top: auto; height: 21px; width: 100%; display: flex; align-items: center; justify-content: center; border-top: 1px solid #dcdcdc; }
      .wall { fill: none; stroke: #a6a6a6; stroke-width: 1.2; }
      .thin { fill: none; stroke: #9a9a9a; stroke-width: .8; }
      .grn { fill: none; stroke: #b0d0a0; stroke-width: 1; }
      .grn2 { fill: none; stroke: #b0d0a0; stroke-width: 1.6; }
      .dash { fill: none; stroke: #a4c8ac; stroke-width: 1; stroke-dasharray: 3 1.5; }
      .brn { fill: none; stroke: #b8a8a8; stroke-width: 1.3; }
      .cir { fill: none; stroke: #dfaed4; stroke-width: 1; }
      .pink text { font: 37px "Liberation Sans", sans-serif; fill: #e2a6cc; stroke: #5a3f98; stroke-width: .45; }
      .green text { font: 50px "Liberation Sans", sans-serif; fill: #b5d3a8; stroke: #2f6a5a; stroke-width: .6; }
      .mk { fill: #9a9a9a; }
      .mk2 { fill: #d6d6d6; }
    </style>
    <svg viewBox="472 241 1905 995" width="1905" height="995">
      <polyline class="wall" points="472,329 837,313 1162,259 1260,261 1352,262 1532,265 1680,267 2177,337 2195,339 2270,340 2377,342"/>
      <polyline class="wall" points="472,427 709,464 1232,598 1430,622 1896,675 2340,657 2377,646"/>
      <polyline class="thin" points="473,605 666,748 1177,1005"/>
      <polyline class="wall" points="1177,1005 1430,1035 1538,1048 1563,1048 2007,1012 2377,896"/>
      <polyline class="thin" points="472,813 595,972 945,1236"/>
      <polyline class="thin" points="2377,1128 2232,1236"/>
      <polyline class="grn" points="539,243 793,677 595,972"/>
      <polyline class="grn" points="793,677 1297,410 1952,243"/>
      <polyline class="grn" points="1297,410 1628,730 2149,1236"/>
      <polyline class="grn" points="2236,243 2377,407"/>
      <polyline class="grn2" points="472,925 595,972 1430,1127 2004,1236"/>
      <polyline class="dash" points="1284,500 845,732 720,921 1430,1053 1958,1153 1284,500"/>
      <polyline class="brn" points="1052,1236 1067,1198 1113,1147 1226,1116 1430,1152 1803,1236"/>
      <polyline class="brn" points="1168,1236 1180,1215 1263,1189 1430,1218 1526,1236"/>
      <circle class="cir" cx="1297" cy="410" r="45"/>
      <circle class="cir" cx="793" cy="677" r="46"/>
      <circle class="cir" cx="597" cy="972" r="46"/>
      <circle class="cir" cx="2186" cy="1269" r="46"/>
      <g class="pink">
        ${tag(1088, [["x =", 303], ["21326.5316", 344], ["y =", 388], ["193446.7801", 429]])}
        ${tag(631, [["x =", 540], ["21292.2654", 582], ["y =", 625], ["193428.6087", 667]])}
        ${tag(456, [["x =", 1087], ["21278.8204", 1135], ["y =", 1170], ["193408.4871", 1220]])}
      </g>
      <g class="green">
        <text x="1183" y="812">849</text>
        <text x="1862" y="542">848</text>
      </g>
      <path class="mk" d="M786 508l9 4.5-9 4.5zM1960 507l-9 5 9 5zM1414 897l-5 9h10z"/>
      <path class="mk2" d="M803 503h2v6h-2zM803 512h2v7h-2zM1410 884h7v3h-7zM1946 505h2v14h-2z"/>
    </svg>
    <div class="bar">
      <div class="top"><svg width="14" height="10" viewBox="0 0 14 10"><path d="M2 8l5-5 5 5" fill="none" stroke="#999" stroke-width="1.8"/></svg></div>
      <div class="thumb"></div>
      <div class="down"><svg width="14" height="10" viewBox="0 0 14 10"><path d="M2 2l5 5 5-5" fill="none" stroke="#999" stroke-width="1.8"/></svg></div>
    </div>`;
  }
}

class RvtViewbar extends HTMLElement {
  constructor() {
    super();
    this.attachShadow({ mode: "open" });
    const items = [["vbscale",20,32],["vbcube",17,15],["vbsun",20,14],["vbshadow",19,12],["vbcropx",21,13],["vbcrop",19,13],["vbglass",17,14],["vbbulb",15,16],["vbhide",17,17],["vbsect",21,14],["vbtemp",21,11]];
    this.shadowRoot.innerHTML = `
    <style>
      :host { display: flex; height: 21px; flex: none; background: #e8e8e8; color: #444; font-size: 13px; white-space: nowrap; margin-bottom: 1px; }
      .tools { width: 457px; flex: none; background: #f5f5f5; display: flex; align-items: center; padding-left: 33px; box-sizing: border-box; }
      .scale { width: 40px; flex: none; }
      .lt { width: 19px; flex: none; display: flex; align-items: center; justify-content: center; border-right: 1px solid #ddd; box-sizing: border-box; }
      .thumb { width: 20px; height: 10px; margin: 5px 0 0 696px; background: #8a8a8a; border-radius: 4px; flex: none; }
      .rt { margin-left: auto; width: 12px; display: flex; align-items: center; }
    </style>
    <div class="tools"><span class="scale">1 : 100</span>${items.map(([n, w, m]) => `<rvt-icon name="${n}" w="${w}" h="19" style="margin-left:${m}px"></rvt-icon>`).join("")}</div>
    <div class="lt"><svg width="8" height="14" viewBox="0 0 8 14"><path d="M6 2L2 7l4 5" fill="none" stroke="#999" stroke-width="1.6"/></svg></div>
    <div class="thumb"></div>
    <div class="rt"><svg width="8" height="14" viewBox="0 0 8 14"><path d="M2 2l4 5-4 5" fill="none" stroke="#999" stroke-width="1.6"/></svg></div>
    <svg width="19" height="21" viewBox="0 0 19 21"><path d="M9 14h2v2H9zM13 14h2v2h-2zM13 10h2v2h-2z" fill="#666"/></svg>`;
  }
}

class RvtStatusbar extends HTMLElement {
  constructor() {
    super();
    this.attachShadow({ mode: "open" });
    const sel = [["sel1",16,249],["sel2",19,16],["sel3",16,15],["sel4",18,16],["sel5",16,15],["sel6",18,15],["funnel",19,11]];
    const chev = (c) => `<svg width="8" height="6" viewBox="0 0 8 6" style="flex:none"><path d="M1 1l3 3.5 3-3.5" fill="none" stroke="${c}" stroke-width="1.4"/></svg>`;
    this.shadowRoot.innerHTML = `
    <style>
      :host { display: flex; align-items: center; height: 33px; flex: none; box-sizing: border-box; background: #f5f5f5; border-top: 2px solid #fff; border-bottom: 3px solid #b4c0c4; padding: 1px 0 0 2px; color: #444; font-size: 14px; white-space: nowrap; }
      .chk { width: 14px; height: 14px; background: #777; border-radius: 1px; flex: none; margin-left: 17px; display: flex; }
      .gap1 { margin-left: 254px; display: flex; }
      .gap2 { margin-left: 54px; display: flex; }
    </style>
    <span style="width:1055px;flex:none">Bereit</span>
    <rvt-icon name="wshare" w="22" h="24"></rvt-icon>
    <span class="gap1">${chev("#999")}</span>
    <rvt-icon name="editreq" w="16" h="20" style="margin-left:16px"></rvt-icon>
    <span style="margin-left:2px;width:11px;color:#999">:0</span>
    <rvt-icon name="optlist" w="17" h="22" style="margin-left:37px"></rvt-icon>
    <rvt-icon name="optadd" w="19" h="22" style="margin-left:15px"></rvt-icon>
    <span style="margin-left:14px;width:187px;flex:none">V1- Ohne Terrasse&nbsp; &lt;primär&gt;</span>
    <span class="gap2">${chev("#777")}</span>
    <div class="chk"><svg width="14" height="14" viewBox="0 0 14 14"><path d="M3 7l3 3 5-7" fill="none" stroke="#fff" stroke-width="2"/></svg></div>
    <span style="margin-left:2px;width:69px;flex:none">Nur aktive</span>
    ${sel.map(([n, w, m]) => `<rvt-icon name="${n}" w="${w}" h="22" style="margin-left:${m}px"></rvt-icon>`).join("")}
    <span style="margin-left:3px">:0</span>`;
  }
}

class RvtOption extends HTMLElement {
  constructor() {
    super();
    this.attachShadow({ mode: "open" });
    this.shadowRoot.innerHTML = `<style>
      :host { display: block; height: 27px; line-height: 27px; padding-left: 7px; box-sizing: border-box; overflow: hidden; white-space: nowrap; color: #444; font-size: 14px; }
      :host([kind="current"]) { height: 19px; line-height: 19px; background: #b0b0b0; margin: 0 2px; padding-left: 4px; }
      :host([kind="hover"]) { height: 23px; line-height: 21px; background: #7cc8ec; border: 1px solid #3ea8dc; margin: 0 4px 2px 3px; padding-left: 3px; }
    </style><slot></slot>`;
  }
}

class RvtCallouts extends HTMLElement {
  constructor() {
    super();
    this.attachShadow({ mode: "open" });
    this.shadowRoot.innerHTML = `
    <style>
      :host { position: absolute; inset: 0; display: block; pointer-events: none; color: #444; font-size: 14px; }
      .boxes { position: absolute; left: 0; top: 0; }
      .combo { position: absolute; left: 1381px; top: 126px; width: 187px; height: 28px; box-sizing: border-box; background: #7cc8ec; border: 2px solid #3ea8dc; line-height: 24px; padding-left: 3px; white-space: nowrap; overflow: hidden; }
      .combo i { position: absolute; right: 5px; top: 9px; width: 0; height: 0; border-style: solid; border-width: 5px 4px 0 4px; border-color: #4f8fb0 transparent transparent transparent; }
      .menu { position: absolute; left: 1382px; top: 155px; width: 207px; height: 100px; background: #fff; box-sizing: border-box; box-shadow: 2px 3px 3px rgba(0,0,0,.45); }
    </style>
    <div class="combo">V1- Ohne Terrasse&nbsp; &lt;p...<i></i></div>
    <div class="menu"><slot></slot></div>
    <svg class="boxes" width="2398" height="1291">
      <path d="M1315 50H1251.5V200.5H1345" fill="none" stroke="#0f6a96" stroke-width="5"/>
      <path d="M1343 190l29 10.5-29 10.5z" fill="#0f6a96"/>
      <rect x="1317" y="25" width="97" height="51" fill="none" stroke="#e8851a" stroke-width="4"/>
      <path d="M1600 117H1373V272H1600" fill="none" stroke="#e8851a" stroke-width="4"/>
      <path d="M1600 115v159" stroke="#e8851a" stroke-width="4"/>
      <path d="M1580 222v20l5-4 3 7 3-1-3-7h6z" fill="#fff" stroke="#222"/>
    </svg>`;
  }
}

// Register the elements
customElements.define("rvt-icon", RvtIcon);
customElements.define("rvt-caret", RvtCaret);
customElements.define("rvt-sep", RvtSep);
customElements.define("rvt-app", RvtApp);
customElements.define("rvt-titlebar", RvtTitlebar);
customElements.define("rvt-tabs", RvtTabs);
customElements.define("rvt-tab", RvtTab);
customElements.define("rvt-ribbon", RvtRibbon);
customElements.define("rvt-panel", RvtPanel);
customElements.define("rvt-big", RvtBig);
customElements.define("rvt-col", RvtCol);
customElements.define("rvt-small", RvtSmall);
customElements.define("rvt-pane-head", RvtPaneHead);
customElements.define("rvt-scrollbar", RvtScrollbar);
customElements.define("rvt-properties", RvtProperties);
customElements.define("rvt-prop-head", RvtPropHead);
customElements.define("rvt-prop-row", RvtPropRow);
customElements.define("rvt-browser", RvtBrowser);
customElements.define("rvt-tree-row", RvtTreeRow);
customElements.define("rvt-viewtabs", RvtViewtabs);
customElements.define("rvt-canvas", RvtCanvas);
customElements.define("rvt-viewbar", RvtViewbar);
customElements.define("rvt-statusbar", RvtStatusbar);
customElements.define("rvt-option", RvtOption);
customElements.define("rvt-callouts", RvtCallouts);
</script>
</body>
</html>
